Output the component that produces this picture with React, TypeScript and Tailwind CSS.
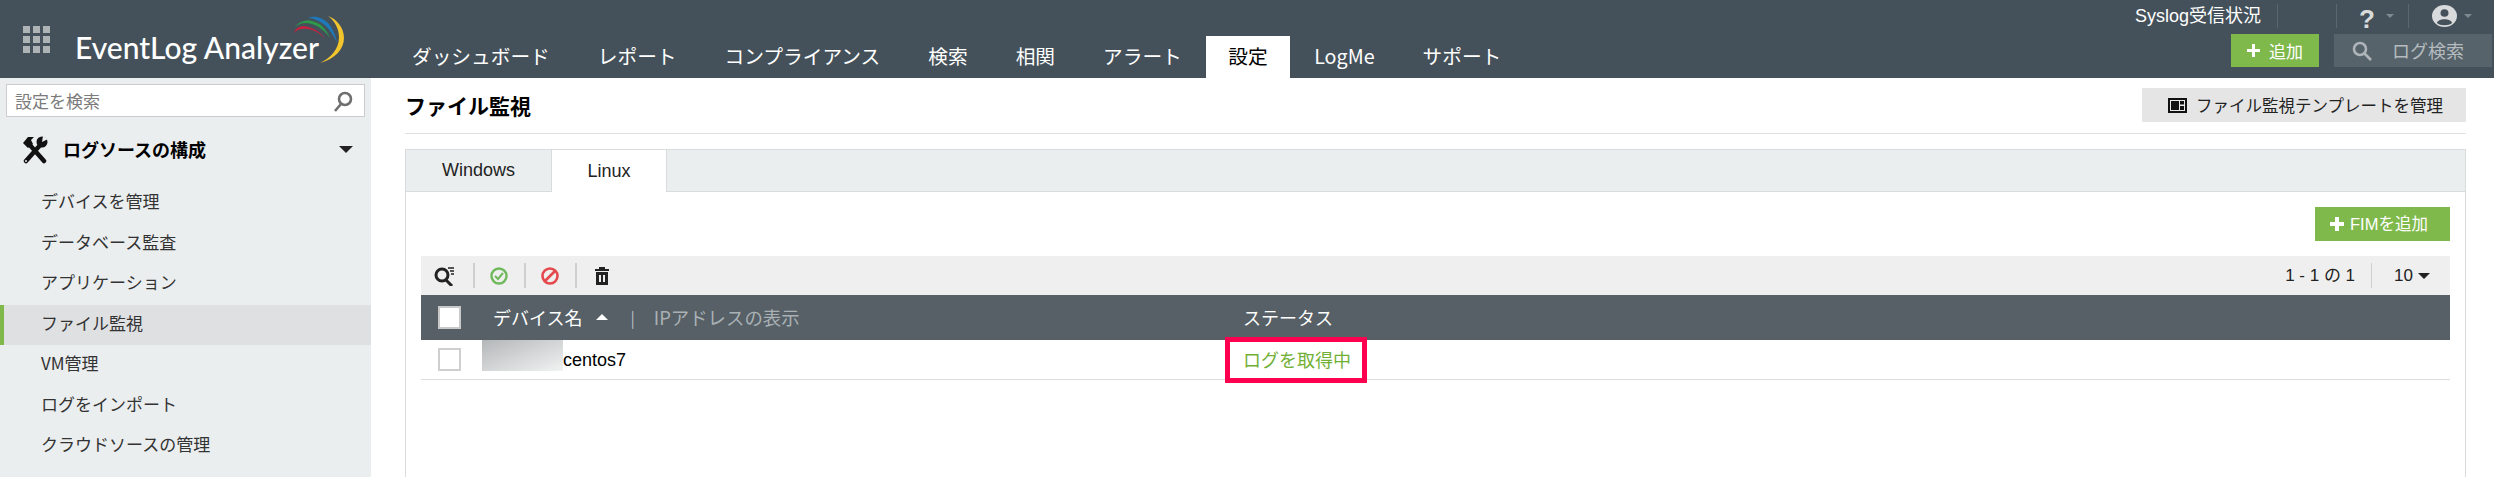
const navItems = ["ダッシュボード", "レポート", "コンプライアンス", "検索", "相関", "アラート", "設定", "LogMe", "サポート"];
const sideItems = ["デバイスを管理", "データベース監査", "アプリケーション", "ファイル監視", "VM管理", "ログをインポート", "クラウドソースの管理"];

function Logo() {
  return (
    <div className="relative ml-[75px] w-[270px] h-[78px] shrink-0">
      <span className="absolute left-0 top-[29px] text-[30px] leading-[36px] font-medium text-white whitespace-nowrap font-['Lato',sans-serif]">
        EventLog Analyzer
      </span>
      <svg className="absolute left-[210px] top-[10px]" width="70" height="60" viewBox="0 0 70 60">
        <path d="M9 23C12 15 20 15.5 26 18C32 20 37 24 40 29C35 23 29 20 23 19C17 18 12 19 9 23Z" fill="#c8213e" />
        <path d="M10 17C15 10 24 9 30 12C37 14 42 21 45 28C40 21 34 16 27 14C20 12 15 13 10 17Z" fill="#2c9a49" />
        <path d="M23 8C30 5 38 8 43 13C48 18 51 27 52 33C48 24 43 17 37 13C32 10 28 8 23 8Z" fill="#1f78b8" />
        <path d="M43 6C52 9 59 18 59 28C59 39 50 49 35 53C45 48 54 40 54 27C54 19 50 11 43 6Z" fill="#f2c52d" />
      </svg>
    </div>
  );
}

function Header() {
  return (
    <header className="flex h-[78px] bg-[#44515a] shrink-0">
      <div className="w-[75px] shrink-0 -mr-[75px] pl-[23px] pt-[26px]">
        <div className="grid grid-cols-3 gap-[3px] w-[27px]">
          {Array.from({ length: 9 }).map((_, i) => (
            <div key={i} className="w-[7px] h-[7px] bg-[#aeb3b6]" />
          ))}
        </div>
      </div>
      <Logo />
      <nav className="flex items-end ml-[43px] h-[78px]">
        {navItems.map((item) => (
          <div
            key={item}
            className={
              item === "設定"
                ? "h-[42px] px-[22.5px] pb-[2px] flex items-center bg-white text-black text-[19.7px]"
                : "h-[42px] px-[24px] pb-[2px] flex items-center text-white text-[19.7px] font-['Noto_Sans_CJK_JP',sans-serif]"
            }
          >
            {item}
          </div>
        ))}
      </nav>
      <div className="ml-auto w-[360px] flex flex-col items-end pr-[2px]">
        <div className="flex h-[34px] pb-[2px] items-center text-white">
          <span className="text-[18px] mr-[16px] whitespace-nowrap font-['Liberation_Sans','Noto_Sans_CJK_JP',sans-serif]">Syslog受信状況</span>
          <div className="w-px h-[24px] bg-[#5b676f]" />
          <div className="w-[58px]" />
          <div className="w-px h-[24px] bg-[#5b676f]" />
          <div className="w-[71px] flex items-center pl-[22px] gap-[11px] pt-[6px]">
            <span className="text-[26px] leading-[26px] font-bold text-[#d8dadb] font-['Liberation_Sans',sans-serif]">?</span>
            <span className="w-0 h-0 border-x-[4px] border-x-transparent border-t-[4px] border-t-[#7f8a90] -mt-[6px]" />
          </div>
          <div className="w-px h-[24px] bg-[#5b676f]" />
          <div className="w-[83px] flex items-center pl-[23px] gap-[7px]">
            <svg width="25" height="22" viewBox="0 0 25 22">
              <ellipse cx="12.5" cy="11" rx="12.5" ry="11" fill="#d8dadb" />
              <ellipse cx="12.5" cy="8" rx="4" ry="3.8" fill="#44515a" />
              <path d="M5 18C6 13 19 13 20 18C17 21 8 21 5 18Z" fill="#44515a" />
            </svg>
            <span className="w-0 h-0 border-x-[4px] border-x-transparent border-t-[4px] border-t-[#7f8a90]" />
          </div>
        </div>
        <div className="flex gap-[15px]">
          <div className="w-[88px] h-[33px] bg-[#7fb94c] text-white flex items-center justify-center gap-[9px] text-[17px]">
            <svg width="13" height="13" viewBox="0 0 13 13"><path d="M5 0h3v5h5v3H8v5H5V8H0V5h5z" fill="#fff" /></svg>
            追加
          </div>
          <div className="w-[158px] h-[33px] bg-[#56636b] text-[#b5bbbf] flex items-center gap-[20px] pl-[18px] text-[18px]">
            <svg width="20" height="20" viewBox="0 0 20 20" fill="none" stroke="#aeb4b8" strokeWidth="2.6">
              <circle cx="8" cy="8" r="6" />
              <path d="M12.5 12.5L19 19" />
            </svg>
            ログ検索
          </div>
        </div>
      </div>
    </header>
  );
}

function Sidebar() {
  return (
    <aside className="w-[371px] shrink-0 bg-[#ebeeef] pt-[6px] px-0">
      <div className="mx-[6px] w-[359px] h-[33px] bg-white border border-[#cccccc] flex items-center justify-between pl-[8px] pr-[10px] text-[17px] text-[#7b7b7b]">
        設定を検索
        <svg width="22" height="22" viewBox="0 0 22 22" fill="none" stroke="#6e6e6e" strokeWidth="2.6">
          <circle cx="13" cy="9" r="6" />
          <path d="M9 14L3 21" />
        </svg>
      </div>
      <div className="h-[65px] flex items-center pl-[22px] pr-[18px] font-bold text-[18px] text-black">
        <svg width="26" height="28" viewBox="0 0 26 28" className="mr-[15px]">
          <path d="M7 8L22 25" stroke="#111" strokeWidth="4.5" strokeLinecap="round" />
          <path d="M1 7L6 1L12 1L9 4L11 8L6 12Z" fill="#111" />
          <path d="M20 7L4 25" stroke="#111" strokeWidth="4.5" strokeLinecap="round" />
          <circle cx="20" cy="6" r="5.5" fill="#111" />
          <path d="M20 6L21 0L26 3Z" fill="#ebeeef" />
          <circle cx="4" cy="25" r="1" fill="#ebeeef" />
        </svg>
        ログソースの構成
        <span className="ml-auto w-0 h-0 border-x-[7px] border-x-transparent border-t-[7px] border-t-[#222]" />
      </div>
      <ul className="pt-[1px]">
        {sideItems.map((item) => (
          <li
            key={item}
            className={
              item === "ファイル監視"
                ? "h-[39.5px] my-[0.5px] pb-[4px] flex items-center pl-[37px] border-l-[4px] border-[#7fb94c] bg-[#dfe0e2] text-[17px] text-[#333]"
                : "h-[40.5px] pb-[5px] flex items-center pl-[41px] text-[17px] text-[#333]"
            }
          >
            {item}
          </li>
        ))}
      </ul>
    </aside>
  );
}

function Toolbar() {
  return (
    <div className="h-[39px] bg-[#efefef] flex items-center pl-[13px] pr-[20px] text-[#222]">
      <svg width="20" height="20" viewBox="0 0 20 20" fill="none">
        <circle cx="8" cy="9" r="6" stroke="#222" strokeWidth="3" />
        <path d="M12 14L18 20" stroke="#222" strokeWidth="3" />
        <path d="M14 2h6M16 5h4M17 8h3" stroke="#222" strokeWidth="1.4" />
      </svg>
      <div className="w-[2px] h-[25px] bg-[#cfcfcf] ml-[19px] mr-[15px]" />
      <svg width="18" height="18" viewBox="0 0 18 18" fill="none">
        <circle cx="9" cy="9" r="7.5" stroke="#6fb85b" strokeWidth="2.4" />
        <path d="M5 9l3 3 5-6" stroke="#6fb85b" strokeWidth="2" />
      </svg>
      <div className="w-[2px] h-[25px] bg-[#cfcfcf] ml-[16px] mr-[15px]" />
      <svg width="18" height="18" viewBox="0 0 18 18" fill="none">
        <circle cx="9" cy="9" r="7.5" stroke="#e5484d" strokeWidth="2.6" />
        <path d="M4 14L14 4" stroke="#e5484d" strokeWidth="2.6" />
      </svg>
      <div className="w-[2px] h-[25px] bg-[#cfcfcf] ml-[16px] mr-[18px]" />
      <svg width="14" height="18" viewBox="0 0 14 18">
        <path d="M4 0h6v2h4v2H0V2h4zM1 5h12v13H1zM4 8v7h2V8zM8 8v7h2V8z" fill="#222" fillRule="evenodd" />
      </svg>
      <span className="ml-auto text-[17px] whitespace-nowrap font-['Liberation_Sans','Noto_Sans_CJK_JP',sans-serif]">1 - 1 の 1</span>
      <div className="w-px h-[25px] bg-[#cfcfcf] ml-[16px] mr-[22px]" />
      <span className="text-[17px] font-['Liberation_Sans',sans-serif]">10</span>
      <span className="ml-[5px] w-0 h-0 border-x-[6px] border-x-transparent border-t-[6px] border-t-[#222]" />
    </div>
  );
}

function DeviceTable() {
  return (
    <div>
      <div className="h-[45px] bg-[#566066] grid grid-cols-[822px_1fr] items-center text-white">
        <div className="flex items-center pl-[17px]">
          <div className="w-[23px] h-[23px] bg-white border-2 border-[#c9c9c9]" />
          <span className="ml-[32px] text-[18px]">デバイス名</span>
          <span className="ml-[14px] w-0 h-0 border-x-[6px] border-x-transparent border-b-[6px] border-b-white" />
          <span className="ml-[22px] text-[#b9bfc3] text-[16px]">|</span>
          <span className="ml-[19px] text-[18.4px] text-[#aab1b5]">IPアドレスの表示</span>
        </div>
        <span className="text-[18px]">ステータス</span>
      </div>
      <div className="h-[40px] grid grid-cols-[822px_1fr] items-center border-b border-[#dddddd] text-[18px] relative">
        <div className="flex items-center pl-[17px]">
          <div className="w-[23px] h-[23px] bg-white border-2 border-[#cfcfcf]" />
          <div className="ml-[21px] w-[81px] h-[31px] -mt-[8px] bg-gradient-to-br from-[#b4b7b9] to-[#f2f3f3]" />
          <span className="pt-[2px] text-black font-['Liberation_Sans',sans-serif]">centos7</span>
        </div>
        <span className="text-[#72b035]">ログを取得中</span>
        <div className="absolute left-[804px] -top-[3px] w-[142px] h-[46px] border-[5px] border-[#ff0050]" />
      </div>
    </div>
  );
}

export default function App() {
  return (
    <div className="w-[2494px] h-[477px] overflow-hidden flex flex-col bg-white font-['Noto_Sans_CJK_JP','Liberation_Sans',sans-serif]">
      <Header />
      <div className="flex flex-1">
        <Sidebar />
        <main className="flex-1 pl-[34px] pr-[28px] text-black">
          <div className="h-[56px] flex items-center justify-between border-b border-[#e0e0e0]">
            <h1 className="text-[21px] font-bold">ファイル監視</h1>
            <div className="w-[324px] h-[34px] bg-[#e5e5e5] flex items-center pl-[26px] gap-[9px] text-[16.5px] text-[#222] -mt-[1px]">
              <svg width="19" height="15" viewBox="0 0 19 15">
                <path d="M0 0h19v15H0z" fill="#111" />
                <path d="M2 2h15v11H2z" fill="#e8e8e8" />
                <path d="M3 3h8v9H3zM12 3h4v3.5h-4zM12 8h4v4h-4z" fill="#111" />
              </svg>
              ファイル監視テンプレートを管理
            </div>
          </div>
          <div className="mt-[15px] h-[340px] border-x border-t border-[#d9dcdd]">
            <div className="h-[42px] flex bg-[#ebeeef] border-b border-[#d9dcdd] text-[18px]">
              <div className="w-[145px] flex items-center justify-center font-['Liberation_Sans',sans-serif] text-[#222]">Windows</div>
              <div className="w-[116px] h-[42px] flex items-center justify-center bg-white border-x border-[#d9dcdd] font-['Liberation_Sans',sans-serif] text-[#222]">Linux</div>
            </div>
            <div className="px-[15px] pt-[15px]">
              <div className="flex justify-end">
                <div className="w-[135px] h-[34px] bg-[#7fb94c] text-white flex items-center pl-[15px] gap-[6px] text-[16.5px] font-['Liberation_Sans','Noto_Sans_CJK_JP',sans-serif]">
                  <svg width="14" height="14" viewBox="0 0 14 14"><path d="M5 0h4v5h5v4H9v5H5V9H0V5h5z" fill="#fff" /></svg>
                  FIMを追加
                </div>
              </div>
              <div className="mt-[15px]">
                <Toolbar />
                <DeviceTable />
              </div>
            </div>
          </div>
        </main>
      </div>
    </div>
  );
}
